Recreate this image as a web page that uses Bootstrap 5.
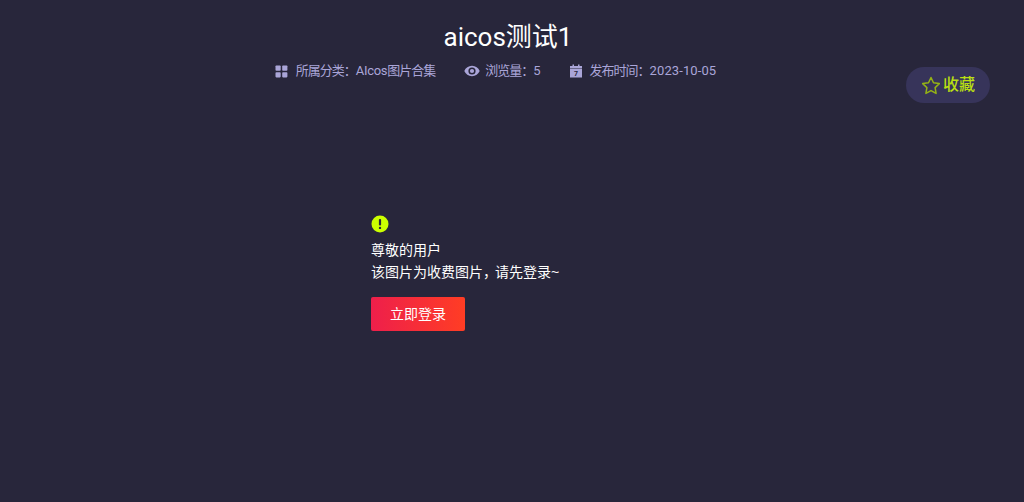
<!DOCTYPE html>
<html lang="zh-CN">
<head>
  <meta charset="UTF-8">
  <meta name="viewport" content="width=device-width, initial-scale=1">
  <title>aicos测试1</title>
  <link href="https://cdn.jsdelivr.net/npm/bootstrap@5.3.0/dist/css/bootstrap.min.css" rel="stylesheet">
  <style>
    body {
      background-color: #28263b;
      font-family: "Liberation Sans", "Noto Sans CJK SC", sans-serif;
      overflow: hidden;
    }
    .page-wrap {
      height: 502px;
      padding-top: 18px;
    }
    .post-title {
      font-family: "Roboto", "Noto Sans CJK SC", sans-serif;
      font-size: 26px;
      line-height: 38px;
      color: #fff;
      font-weight: 400;
      margin-bottom: 0;
      padding-right: 8px;
    }
    .post-meta {
      margin-top: 6px;
      padding-right: 33px;
      font-family: "Roboto", "Noto Sans CJK SC", sans-serif;
      font-size: 13px;
      line-height: 18px;
      color: #aaa5d8;
      gap: 29px;
    }
    .post-meta svg {
      fill: #aaa5d8;
      margin-right: 8px;
    }
    .post-meta .eye-icon {
      margin-right: 5px;
    }
    .cn-text {
      letter-spacing: -1px;
    }
    .cat-name {
      letter-spacing: -0.3px;
    }
    .date-text {
      letter-spacing: 0.1px;
    }
    .fav-btn {
      position: absolute;
      top: 67px;
      left: 906px;
      width: 84px;
      height: 36px;
      border-radius: 18px;
      background: #37345a;
      color: #b9df12;
      font-size: 16px;
      font-weight: 500;
      gap: 2px;
    }
    .pay-box {
      margin: 135px 0 0 371px;
      color: #fff;
      font-size: 14px;
      line-height: 22px;
    }
    .pay-icon {
      display: block;
      margin-bottom: 6px;
    }
    .tight-comma {
      letter-spacing: -2px;
    }
    .login-btn {
      margin-top: 14px;
      width: 94px;
      height: 34px;
      padding: 0;
      border: 0;
      border-radius: 2px;
      font-size: 14px;
      line-height: 34px;
      color: #fff;
      background: linear-gradient(90deg, #ee1f4b, #ff3d24);
    }
    .login-btn:hover {
      color: #fff;
    }
  </style>
</head>
<body>
  <div class="page-wrap position-relative">
    <h1 class="post-title text-center">aicos测试1</h1>
    <div class="post-meta d-flex justify-content-center align-items-center">
      <span class="d-flex align-items-center">
        <svg width="13" height="13" viewBox="0 0 13 13"><rect x="0.5" y="0.5" width="5.2" height="5.2" rx="0.8"/><rect x="7.2" y="0.5" width="5.2" height="5.2" rx="0.8"/><rect x="0.5" y="7.2" width="5.2" height="5.2" rx="0.8"/><rect x="7.2" y="7.2" width="5.2" height="5.2" rx="0.8"/></svg>
        <span><span class="cn-text">所属分类：</span><span class="cat-name">AIcos</span><span class="cn-text">图片合集</span></span>
      </span>
      <span class="d-flex align-items-center">
        <svg class="eye-icon" width="16" height="12" viewBox="0 0 16 12"><path fill-rule="evenodd" d="M8 0.8C4.500 0.800 1.600 3 0.300 6c1.300 3 4.200 5.200 7.700 5.200s6.400-2.200 7.700-5.200C14.400 3 11.500 0.800 8 0.800zM8 9.600a3.600 3.600 0 1 1 0-7.200 3.600 3.600 0 0 1 0 7.200z"/><circle cx="8" cy="6" r="2.100"/></svg>
        <span><span class="cn-text">浏览量：</span>5</span>
      </span>
      <span class="d-flex align-items-center">
        <svg width="12" height="14" viewBox="0 0 12 14"><path fill-rule="evenodd" d="M2.500 0.500h1.500v1.500h4V0.500h1.500v1.500H12v11.500H0V2h2.500zM0 4.600v0.400h12v-0.400z"/><text x="6" y="12.200" text-anchor="middle" font-size="7" font-weight="700" fill="#28263b">7</text></svg>
        <span><span class="cn-text">发布时间：</span><span class="date-text">2023-10-05</span></span>
      </span>
    </div>
    <a class="fav-btn d-flex align-items-center justify-content-center text-decoration-none" href="#">
      <svg width="20" height="19" viewBox="0 0 20 19"><path d="M10 1.500l2.500 5.300 5.800 0.800-4.200 4 1 5.800-5.100-2.800-5.100 2.800 1-5.800-4.200-4 5.800-0.800z" fill="none" stroke="#95b315" stroke-width="1.500" stroke-linejoin="round"/></svg>
      收藏
    </a>
    <div class="pay-box">
      <svg class="pay-icon" width="18" height="18" viewBox="0 0 18 18"><circle cx="9" cy="9" r="8.500" fill="#ccff00"/><rect x="7.900" y="4" width="2.200" height="6.500" rx="1" fill="#28263b"/><circle cx="9" cy="12.900" r="1.200" fill="#28263b"/></svg>
      <div>尊敬的用户</div>
      <div>该图片为收费图片<span class="tight-comma">，</span>请先登录~</div>
      <a class="btn login-btn" href="#">立即登录</a>
    </div>
  </div>
  <script src="https://cdn.jsdelivr.net/npm/bootstrap@5.3.0/dist/js/bootstrap.bundle.min.js"></script>
</body>
</html>
